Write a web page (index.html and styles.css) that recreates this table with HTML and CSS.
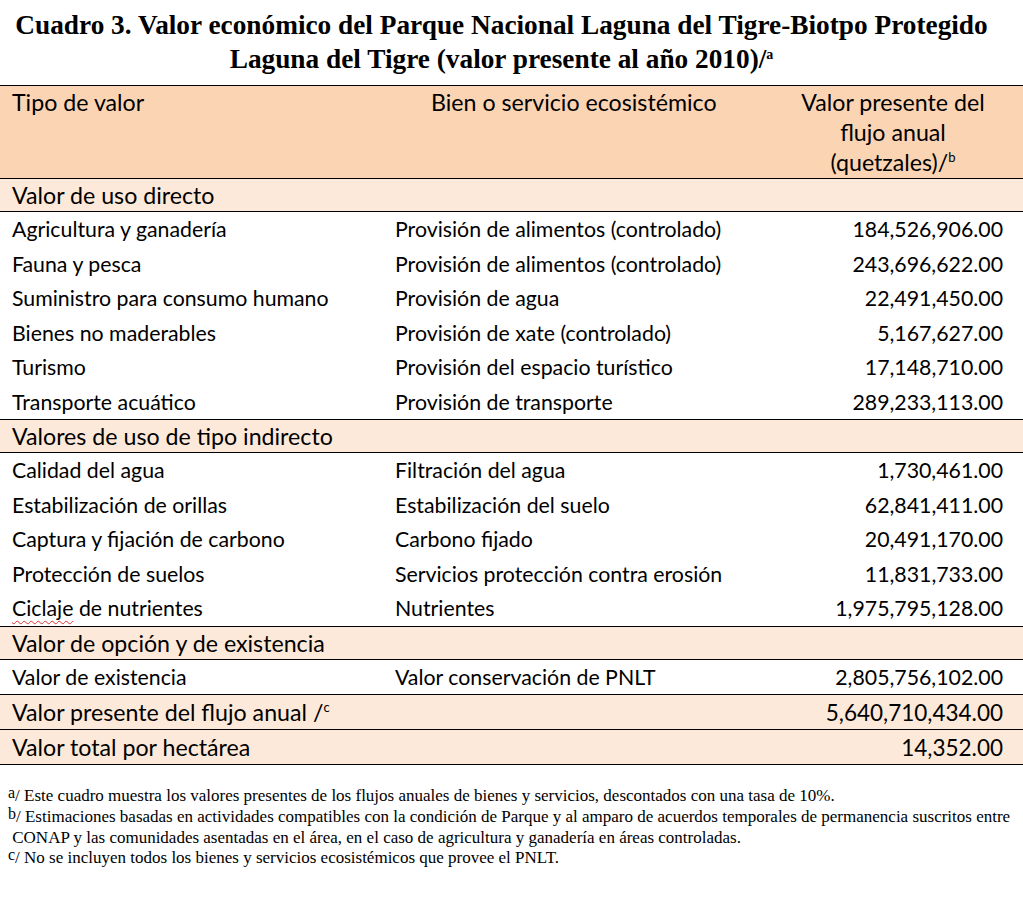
FILE: index.html
```html
<!DOCTYPE html>
<html lang="es">
<head>
<meta charset="utf-8">
<title>Cuadro 3</title>
<link rel="stylesheet" href="styles.css">
</head>
<body>
<h1 class="title">Cuadro 3. Valor económico del Parque Nacional Laguna del Tigre-Biotpo Protegido<br>Laguna del Tigre (valor presente al año 2010)/<sup>a</sup></h1>
<table class="tbl">
  <colgroup>
    <col class="c1"><col class="c2"><col class="c3">
  </colgroup>
  <thead>
    <tr class="head">
      <th class="l">Tipo de valor</th>
      <th class="m">Bien o servicio ecosistémico</th>
      <th class="r">Valor presente del<br>flujo anual<br>(quetzales)/<sup>b</sup></th>
    </tr>
  </thead>
  <tbody>
    <tr class="sec"><td colspan="3">Valor de uso directo</td></tr>
    <tr class="row"><td>Agricultura y ganadería</td><td>Provisión de alimentos (controlado)</td><td class="num">184,526,906.00</td></tr>
    <tr class="row"><td>Fauna y pesca</td><td>Provisión de alimentos (controlado)</td><td class="num">243,696,622.00</td></tr>
    <tr class="row"><td>Suministro para consumo humano</td><td>Provisión de agua</td><td class="num">22,491,450.00</td></tr>
    <tr class="row"><td>Bienes no maderables</td><td>Provisión de xate (controlado)</td><td class="num">5,167,627.00</td></tr>
    <tr class="row"><td>Turismo</td><td>Provisión del espacio turístico</td><td class="num">17,148,710.00</td></tr>
    <tr class="row"><td>Transporte acuático</td><td>Provisión de transporte</td><td class="num">289,233,113.00</td></tr>
    <tr class="sec"><td colspan="3">Valores de uso de tipo indirecto</td></tr>
    <tr class="row"><td>Calidad del agua</td><td>Filtración del agua</td><td class="num">1,730,461.00</td></tr>
    <tr class="row"><td>Estabilización de orillas</td><td>Estabilización del suelo</td><td class="num">62,841,411.00</td></tr>
    <tr class="row"><td>Captura y fijación de carbono</td><td>Carbono fijado</td><td class="num">20,491,170.00</td></tr>
    <tr class="row"><td>Protección de suelos</td><td>Servicios protección contra erosión</td><td class="num">11,831,733.00</td></tr>
    <tr class="row"><td><span class="spell">Ciclaje</span> de nutrientes</td><td>Nutrientes</td><td class="num">1,975,795,128.00</td></tr>
    <tr class="sec"><td colspan="3">Valor de opción y de existencia</td></tr>
    <tr class="row"><td>Valor de existencia</td><td>Valor conservación de PNLT</td><td class="num">2,805,756,102.00</td></tr>
    <tr class="sec tot"><td colspan="2">Valor presente del flujo anual /<sup>c</sup></td><td class="num">5,640,710,434.00</td></tr>
    <tr class="sec tot"><td colspan="2">Valor total por hectárea</td><td class="num">14,352.00</td></tr>
  </tbody>
</table>
<div class="notes">
  <p><sup>a</sup>/ Este cuadro muestra los valores presentes de los flujos anuales de bienes y servicios, descontados con una tasa de 10%.</p>
  <p><sup>b</sup>/ Estimaciones basadas en actividades compatibles con la condición de Parque y al amparo de acuerdos temporales de permanencia suscritos entre<br>&nbsp;CONAP y las comunidades asentadas en el área, en el caso de agricultura y ganadería en áreas controladas.</p>
  <p><sup>c</sup>/ No se incluyen todos los bienes y servicios ecosistémicos que provee el PNLT.</p>
</div>
</body>
</html>
```

FILE: styles.css
```css
html, body {
  margin: 0;
  padding: 0;
  background: #ffffff;
  color: #000000;
}

.title {
  font-family: "Liberation Serif", "Times New Roman", serif;
  font-weight: bold;
  font-size: 27.3px;
  line-height: 34px;
  text-align: center;
  margin: 8px 0 9px 0;
  padding-right: 20px;
}

.title sup {
  font-size: 14px;
  vertical-align: 9px;
  line-height: 0;
}

.tbl {
  width: 100%;
  border-collapse: collapse;
  font-family: Lato, "Liberation Sans", sans-serif;
  font-size: 21.3px;
  color: #000;
}

.c1 { width: 383px; }
.c2 { width: 380px; }

.tbl th,
.tbl td {
  padding: 0 20px 0 12px;
  vertical-align: middle;
}

.tbl th {
  font-weight: normal;
  font-size: 23.2px;
  line-height: 30px;
  vertical-align: top;
  white-space: nowrap;
}

.head {
  background: #fbd4b4;
  border-top: 1px solid #000;
  border-bottom: 1px solid #000;
}

.head th { height: 91px; padding-top: 1px; }
.head .l { text-align: left; }
.head .m { text-align: left; padding-left: 48px; }
.head .r { text-align: center; padding-left: 20px; padding-right: 20px; }

.tbl sup {
  font-size: 13px;
  line-height: 0;
  vertical-align: 9px;
}

.sec {
  background: #fde9d9;
  border-top: 1px solid #000;
  border-bottom: 1px solid #000;
}

.sec td {
  font-size: 23.2px;
  height: 32px;
}

.sec td.num { font-size: 22.5px; }

.tot td { height: 34px; }

.row td { height: 34.5px; }

.num { text-align: right; white-space: nowrap; }

.spell {
  text-decoration: underline wavy #e03030;
  text-decoration-thickness: 1px;
  text-underline-offset: 4px;
}

.notes {
  font-family: "Liberation Serif", "Times New Roman", serif;
  font-size: 17px;
  line-height: 20.8px;
  margin: 21px 0 0 8px;
}

.notes p { margin: 0; }

.notes sup {
  font-size: 16px;
  line-height: 0;
  vertical-align: 3px;
}
```
